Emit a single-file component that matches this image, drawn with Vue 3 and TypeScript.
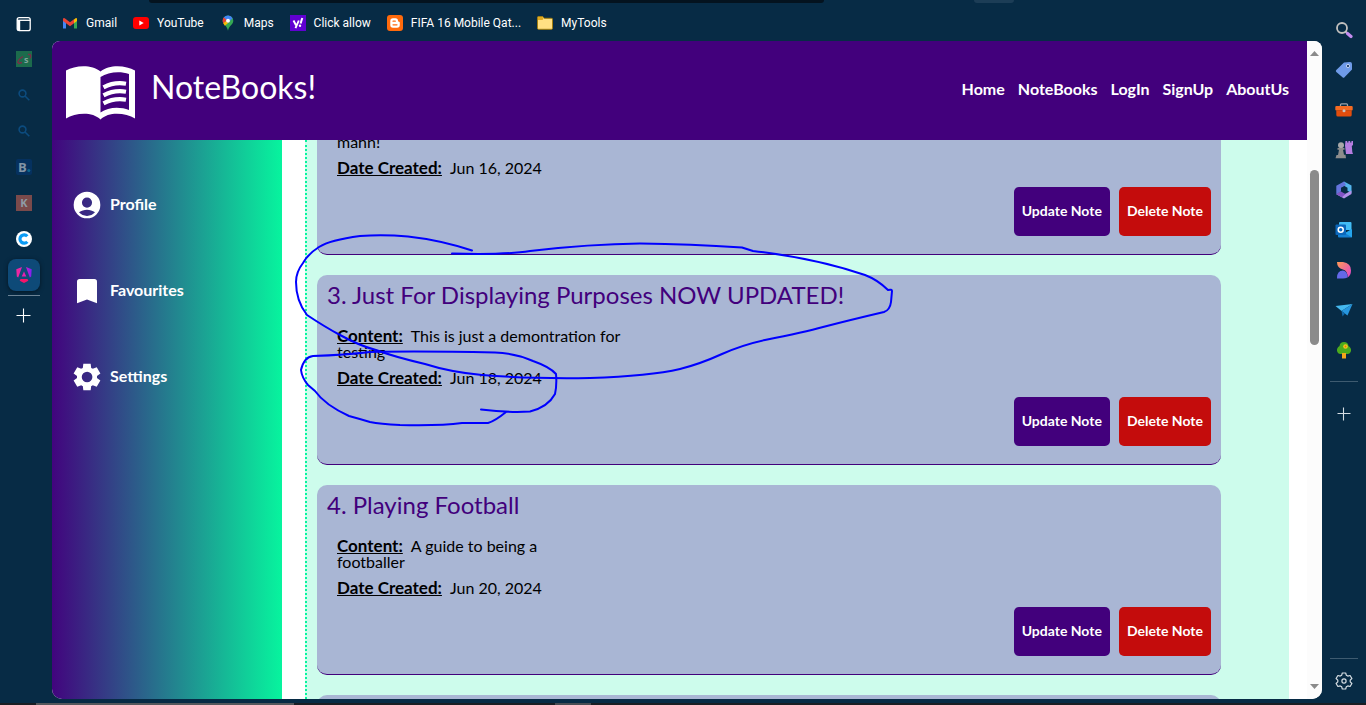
<script setup lang="ts">
interface Note {
  title?: string
  label?: string
  content: string
  date: string
}

const notes: Note[] = [
  { content: 'mahn!', date: 'Jun 16, 2024' },
  {
    title: '3. Just For Displaying Purposes NOW UPDATED!',
    label: 'Content:',
    content: 'This is just a demontration for\ntesting',
    date: 'Jun 18, 2024',
  },
  {
    title: '4. Playing Football',
    label: 'Content:',
    content: 'A guide to being a\nfootballer',
    date: 'Jun 20, 2024',
  },
]

const navLinks: string[] = ['Home', 'NoteBooks', 'LogIn', 'SignUp', 'AboutUs']
</script>

<template>
  <div class="browser">
    <div class="top-edge"><span class="address"></span><span class="chip"></span></div>

    <aside class="tabs">
      <button class="tab tab-first" aria-label="Tab actions">
        <svg width="16" height="16" viewBox="0 0 16 16" fill="none" stroke="#fff" stroke-width="1.3">
          <rect x="1.2" y="1.7" width="13" height="13" rx="2" />
          <path d="M1 4.3h13.4" />
          <path d="M2.7 4v10.5" stroke-width="3" />
        </svg>
      </button>
      <button class="tab" aria-label="Green site">
        <svg width="16" height="16" viewBox="0 0 16 16">
          <rect width="16" height="16" fill="#1c6b4c" />
          <path d="M1.5 12C2 8 4.500 7 7 5.500M2 12.500l4-1M12 3.500c3-.5 3.500 1 2 4" fill="none" stroke="#7c2d48" stroke-width="1.300" />
          <text x="8" y="12" font-size="9" font-weight="700" fill="#7fa39b" font-family="Open Sans, sans-serif">s</text>
        </svg>
      </button>
      <button v-for="n in 2" :key="n" class="tab" aria-label="Search tab">
        <svg width="16" height="16" viewBox="0 0 16 16" fill="none" stroke="#0c4b7e" stroke-width="1.6">
          <circle cx="6.500" cy="6.500" r="3.400" />
          <path d="M9 9l4.300 4.300" />
        </svg>
      </button>
      <button class="tab" aria-label="Booking tab">
        <svg width="16" height="16" viewBox="0 0 16 16">
          <rect width="16" height="16" rx="2" fill="#05315f" />
          <text x="2" y="13" font-size="13" font-weight="700" fill="#8294a5" font-family="Open Sans, sans-serif">B</text>
          <circle cx="12.800" cy="11.500" r="1.500" fill="#0d668f" />
        </svg>
      </button>
      <button class="tab" aria-label="K tab">
        <svg width="16" height="16" viewBox="0 0 16 16">
          <rect width="16" height="16" fill="#7a4a4b" />
          <text x="4.300" y="12" font-size="11" font-weight="700" fill="#8e9ba5" font-family="Open Sans, sans-serif">K</text>
        </svg>
      </button>
      <button class="tab" aria-label="C tab">
        <svg width="16" height="16" viewBox="0 0 16 16">
          <circle cx="8" cy="8" r="8" fill="#fff" />
          <path d="M11.300 5.200A4.200 4.200 0 1 0 11.300 10.800" fill="none" stroke="#0a9bf5" stroke-width="3.200" />
        </svg>
      </button>
      <button class="tab" aria-label="Angular tab">
        <span class="active">
          <svg width="16" height="16" viewBox="0 0 16 16">
            <defs>
              <linearGradient id="ng" x1="0" x2="1">
                <stop offset="0" stop-color="#f0289a" />
                <stop offset="0.550" stop-color="#e020c0" />
                <stop offset="1" stop-color="#7b20f5" />
              </linearGradient>
            </defs>
            <path d="M.3 2.300L6 0 2.200 10.500.8 9.500ZM15.700 2.300L10 0l3.800 10.500 1.400-1Z" fill="url(#ng)" />
            <path d="M8 4.500l2.300 5H5.700Z" fill="#e51fb0" />
            <path d="M4.500 12h7l.8 1.800L8 16l-4.300-2.200Z" fill="#f5146a" />
          </svg>
        </span>
      </button>
      <hr class="rail-line" />
      <button class="tab add" aria-label="New tab">
        <svg width="16" height="16" viewBox="0 0 16 16" stroke="#fff" stroke-width="1.100"><path d="M.5 7.500h14M7.500.5v14" /></svg>
      </button>
    </aside>

    <nav class="bookmarks" aria-label="Bookmarks">
      <a href="#gmail">
        <svg width="16" height="16" viewBox="0 0 16 16">
          <path d="M1 4v9.500h3V6.500Z" fill="#4285f4" />
          <path d="M15 4v9.500h-3V6.500Z" fill="#34a853" />
          <path d="M12 4.500l1.500-1.300Q15 2.500 15 4.500V6l-3 2.300Z" fill="#fbbc04" />
          <path d="M1 6V4.500Q1 2.500 2.700 3.200L8 7.300l4-3v4l-4 3-4-3Z" fill="#ea4335" />
        </svg>Gmail</a>
      <a href="#youtube">
        <svg width="16" height="16" viewBox="0 0 16 16">
          <rect y="2" width="16" height="12" rx="3" fill="#f00" />
          <path d="M6.300 5.500L10.700 8l-4.400 2.500Z" fill="#fff" />
        </svg>YouTube</a>
      <a href="#maps">
        <svg width="16" height="16" viewBox="0 0 16 16">
          <path d="M8 .5a5.300 5.300 0 0 0-5.300 5.300C2.700 9.500 7 10.500 8 15.800 9 10.500 13.300 9.500 13.300 5.800A5.300 5.300 0 0 0 8 .5Z" fill="#34a853" />
          <path d="M3.800 2.500A5.300 5.300 0 0 0 3.500 8.500L7 5Z" fill="#ea4335" />
          <path d="M3.300 8.300L8 4.500l2 2-5.200 4.300Z" fill="#fbbc04" />
          <path d="M3.800 2.600A5.300 5.300 0 0 1 12.600 3.200L8 8Z" fill="#4285f4" />
          <path d="M3.800 2.600L6.500 4.800 5 6.500 2.900 4.600Z" fill="#ea4335" />
          <circle cx="8" cy="5.700" r="1.900" fill="#fff" />
        </svg>Maps</a>
      <a href="#click">
        <svg width="16" height="16" viewBox="0 0 16 16">
          <rect width="16" height="16" fill="#6001d2" />
          <path d="M3.500 5.500L6 10.300M8.800 5.500L5.500 13.200" stroke="#fff" stroke-width="1.900" fill="none" />
          <path d="M12.300 3L10.600 8.500" stroke="#fff" stroke-width="2" />
          <circle cx="10" cy="10.700" r="1.200" fill="#fff" />
        </svg>Click allow</a>
      <a href="#fifa">
        <svg width="16" height="16" viewBox="0 0 16 16">
          <rect width="16" height="16" rx="3" fill="#ff6a0c" />
          <path d="M6 3.300h2.500a2.500 2.500 0 0 1 2.500 2.500q0 1 1 1 .8 0 .8 1v2.200a2.700 2.700 0 0 1-2.700 2.700H6a2.700 2.700 0 0 1-2.700-2.700V6A2.700 2.700 0 0 1 6 3.300Z" fill="#fff" />
          <path d="M6 6.200h2.300M6 9.800h4" stroke="#ff6a0c" stroke-width="1.200" stroke-linecap="round" />
        </svg>FIFA 16 Mobile Qat...</a>
      <a href="#mytools">
        <svg width="16" height="16" viewBox="0 0 16 16">
          <path d="M.5 2.500Q.5 1.500 1.500 1.500h4.200l1.600 1.800h7q1.200 0 1.200 1v9q0 1-1 1h-13q-1 0-1-1Z" fill="#ffe083" stroke="#a07d10" />
          <path d="M1 2h4.500L6.600 3.500 5.500 5H1Z" fill="#e0a920" />
        </svg>MyTools</a>
    </nav>

    <div class="page">
      <div class="site">
        <header class="site-header">
          <svg class="logo" width="69" height="54" viewBox="0 0 69 54">
            <path d="M0 4.500C9-1 26-2 34.500 5.500 43-2 60-1 69 4.500V52.500C60 47 43 45 34.500 53.500 26 45 9 47 0 52.500Z" fill="#fff" />
            <path d="M34.500 11C42 6 54 5 63 8V44C54 40.500 42 41 34.500 46.500Z" fill="#42007c" />
            <path d="M37.500 21.300Q48 15.800 60 17.700M37.500 29.300Q48 23.800 60 25.700M37.500 37.300Q48 31.800 60 33.700" fill="none" stroke="#fff" stroke-width="4.200" />
          </svg>
          <h1>NoteBooks!</h1>
          <nav class="site-nav" aria-label="Main">
            <a v-for="link in navLinks" :key="link" :href="'#' + link">{{ link }}</a>
          </nav>
        </header>

        <div class="body">
          <aside class="menu">
            <a href="#profile">
              <svg width="32" height="32" viewBox="0 0 24 24" fill="#fff"><path d="M12 2a10 10 0 1 0 0 20 10 10 0 0 0 0-20Zm0 4.400a3.800 3.800 0 1 1 0 7.600 3.800 3.800 0 0 1 0-7.600Zm0 13.800c-2.300 0-4.500-1-6-2.700 3.500-2.700 8.500-2.700 12 0A8 8 0 0 1 12 20.200Z" /></svg>
              <span>Profile</span>
            </a>
            <a href="#favourites">
              <svg width="32" height="32" viewBox="0 0 24 24" fill="#fff"><path d="M6.500 3h11q2 0 2 2v16.200L12 18.300l-7.500 2.900V5q0-2 2-2Z" /></svg>
              <span>Favourites</span>
            </a>
            <a href="#settings">
              <svg width="32" height="32" viewBox="0 0 24 24" fill="#fff"><path d="M9.250 22l-.4-3.200q-.325-.125-.612-.3t-.563-.375L4.700 19.375l-2.750-4.750 2.575-1.950Q4.500 12.500 4.500 12.338v-.675q0-.163.025-.338L1.950 9.375l2.750-4.750 2.975 1.250q.275-.2.575-.375t.6-.3L9.250 2h5.500l.4 3.200q.325.125.613.3t.562.375l2.975-1.250 2.750 4.750-2.575 1.950q.025.175.025.338v.675q0 .162-.05.337l2.575 1.950-2.750 4.750-2.950-1.250q-.275.2-.575.375t-.6.3l-.4 3.200Zm2.800-6a4 4 0 1 0 0-8 4 4 0 0 0 0 8Z" /></svg>
              <span>Settings</span>
            </a>
          </aside>

          <main class="notes">
            <article v-for="note in notes" :key="note.date" class="card" :class="{ partial: !note.title }">
              <h2 v-if="note.title">{{ note.title }}</h2>
              <p class="content"><b v-if="note.label">{{ note.label }}</b>{{ note.content }}</p>
              <p class="date"><b>Date Created:</b>{{ note.date }}</p>
              <div class="actions">
                <button class="update">Update Note</button>
                <button class="delete">Delete Note</button>
              </div>
            </article>
            <div class="card next"></div>
          </main>
        </div>
      </div>

      <div class="scrollbar">
        <svg width="9" height="5" viewBox="0 0 9 5"><path d="M0 5L4.500 0 9 5Z" fill="#8b8b8b" /></svg>
        <div class="track"><div class="thumb"></div></div>
        <svg width="9" height="5" viewBox="0 0 9 5"><path d="M0 0h9L4.500 5Z" fill="#8b8b8b" /></svg>
      </div>
    </div>

    <aside class="tools">
      <button aria-label="Search">
        <svg width="18" height="18" viewBox="0 0 18 18" fill="none"><circle cx="7" cy="7" r="5" stroke="#c3c1bf" stroke-width="1.800" /><path d="M10.500 10.500l2 2" stroke="#c3c1bf" stroke-width="2" /><path d="M12.500 12.500l3.500 3" stroke="#c48cf0" stroke-width="3.200" stroke-linecap="round" /></svg>
      </button>
      <button aria-label="Shopping">
        <svg width="18" height="18" viewBox="0 0 18 18"><path d="M9 1.500L15 1Q17 1 17 3v5.500L9.500 16.300q-1 1-2 0L1.300 11q-1-1 0-2Z" fill="#6f9be8" /><circle cx="13" cy="5" r="1.600" fill="#1b3a66" stroke="#dce8ff" stroke-width=".8" /></svg>
      </button>
      <button aria-label="Toolbox">
        <svg width="18" height="18" viewBox="0 0 18 18"><path d="M5.500 5.500V3.800q0-1 1-1h5q1 0 1 1v1.700" fill="none" stroke="#9ca3a8" stroke-width="1.300" /><rect x=".3" y="5" width="17.400" height="4.500" rx="1" fill="#f56b22" /><path d="M1.300 9.300h15.400v4.700q0 1.500-1.500 1.500H2.800q-1.500 0-1.500-1.500Z" fill="#e24d0d" /><circle cx="9" cy="9.700" r="1.500" fill="#c8c5c2" /></svg>
      </button>
      <button aria-label="Games">
        <svg width="18" height="18" viewBox="0 0 18 18"><path d="M10.500 0h1.700v1.500h1.200V0h1.800v1.500h1.200V0H18v4l-1.200 1 .5 6 .7 2h-7l-1-8.500Z" fill="#b57de0" /><circle cx="6" cy="4.300" r="3" fill="#a8a8a8" /><path d="M2.500 7h7v1.800H8l1 5h1.500l.5 3.500H.5L1.500 14H3l1-5.200H2.500Z" fill="#8c8c8c" /></svg>
      </button>
      <button aria-label="Microsoft 365">
        <svg width="18" height="18" viewBox="0 0 18 18"><path d="M9 .5L16.500 4.500V12l-4-2.300V6.700L9 4.700 6.500 6Z" fill="#54b5ed" /><path d="M9 .5L1.300 4.700v8.600L6 10.500V6.700L11 4Z" fill="#6474dc" /><path d="M1.300 13.300L9 17.500l7.500-4.400V9.500L9 13.500 5.500 11Z" fill="#b391e8" /><path d="M1.300 13.300L6 10.500l4.500 2.500L7 16.300Z" fill="#8254c6" /></svg>
      </button>
      <button aria-label="Outlook">
        <svg width="18" height="18" viewBox="0 0 18 18"><rect x="4" y="1" width="12.500" height="8" rx="1" fill="#42bdf5" /><path d="M3 8l7 4.500L17 8v7.500q0 1-1 1H4q-1 0-1-1Z" fill="#147fd1" /><path d="M10 12l7-4v8.500Z" fill="#25a5ec" /><rect x=".5" y="3.500" width="10.500" height="10.500" rx="1" fill="#0b67bb" /><circle cx="5.700" cy="8.700" r="2.500" fill="none" stroke="#fff" stroke-width="1.500" /></svg>
      </button>
      <button aria-label="Designer">
        <svg width="18" height="18" viewBox="0 0 18 18"><defs><linearGradient id="dsg" x1="0" x2="1" y2="1"><stop offset="0" stop-color="#ff9b55" /><stop offset="1" stop-color="#df3fd0" /></linearGradient></defs><path d="M2 1h6q8 1 8 8.500 0 5-3.500 7Q13 10 8 8.500 2 7 2 1Z" fill="url(#dsg)" /><path d="M2 17q0-7.500 6-7.500 4.500.5 4.500 7-2 1-4.500 1H2Z" fill="#6468e8" /></svg>
      </button>
      <button aria-label="Drop">
        <svg width="18" height="18" viewBox="0 0 18 18"><path d="M.5 5L17.500 3 6.500 10Z" fill="#45b9ef" /><path d="M17.500 3L12.500 14.500 6.500 10Z" fill="#2797df" /><path d="M6.500 10l1 5.500L10 12.600Z" fill="#1269a8" /></svg>
      </button>
      <button aria-label="Tree">
        <svg width="18" height="18" viewBox="0 0 18 18"><path d="M9 1q4 0 4.500 4 3 2 2.500 5-1 3.500-4 3H6q-3 .5-4-3-.5-3 2.500-5Q5 1 9 1Z" fill="#4cab1d" /><path d="M7 12h4v5.500H7Z" fill="#f5a51a" /><circle cx="10.500" cy="5.500" r="2.300" fill="#f2c81b" /><circle cx="10.500" cy="5.500" r=".9" fill="#e5780c" /></svg>
      </button>
      <hr class="tool-line" />
      <button class="tool-add" aria-label="Customize">
        <svg width="16" height="16" viewBox="0 0 16 16" stroke="#d5dde3" stroke-width="1.100"><path d="M1.500 7.500h13M7.500 1.500v13" /></svg>
      </button>
      <div class="fill"></div>
      <hr class="tool-line" />
      <button class="tool-settings" aria-label="Settings">
        <svg width="18" height="18" viewBox="0 0 18 18" fill="none" stroke="#d5dde3" stroke-width="1.200"><path d="M7.300 1h3.400l.6 2.200 1.500.9 2.300-.6L16.900 6.500 15.200 8.200v1.600l1.700 1.700-1.800 3-2.300-.6-1.500.9-.6 2.200H7.300l-.6-2.200-1.500-.9-2.300.6-1.800-3L2.800 9.800V8.200L1.100 6.500l1.800-3 2.300.6 1.500-.9Z" stroke-linejoin="round" /><circle cx="9" cy="9" r="2.100" /></svg>
      </button>
    </aside>

    <div class="taskbar"><span class="task"></span><span class="task-chip"></span></div>

    <svg class="ink" width="620" height="210" viewBox="285 225 620 210" fill="none" stroke="#00f" stroke-width="2" stroke-linecap="round" stroke-linejoin="round">
      <path d="M472 250.500Q440 240 408 236.500Q384 234.500 360 236Q330 240 319 247Q308 254 303 263Q296 272 296 282Q296 301 307 315Q325 327 340 335Q360 346 376 350Q395 357 425 364Q450 372 482 375Q530 379 590 378Q650 376 680 369Q700 364 722 354Q742 345 765 340Q805 332 823 327Q850 320 884 312Q890 310 891 302L892 291Q892 289 888 290Q878 280 865 275Q815 258 753 251L742 247.500Q690 244 640 243.500Q590 244 530 251Q505 255 452 253.500" />
      <path d="M481 409.500Q510 413 530 411.500Q548 407 555 394Q557 385 556 374Q550 367 533 361Q515 353 495 352.500Q420 351 370 352Q345 355 313 356Q304 357 301 370Q302 378 308 385L315 391Q325 405 349 416Q360 419 370 422Q380 424 400 425Q440 426 462 423H488Q495 421 506 412" />
    </svg>
  </div>
</template>

<style>
body {
  margin: 0;
}
</style>

<style scoped>
* {
  box-sizing: border-box;
}
.browser {
  position: relative;
  display: grid;
  grid-template-columns: 52px minmax(0, 1fr) 44px;
  grid-template-rows: 4px 37px minmax(0, 1fr) 6px;
  height: 100vh;
  background: #072b45;
  overflow: hidden;
  font-family: Lato, 'Liberation Sans', sans-serif;
}
button {
  border: 0;
  padding: 0;
  background: none;
  font-family: inherit;
  cursor: pointer;
}
a {
  color: inherit;
  text-decoration: none;
}
svg {
  display: block;
  flex: none;
}
hr {
  border: 0;
  margin: 0;
}

.top-edge {
  grid-column: 1 / -1;
  display: flex;
  gap: 150px;
  padding-left: 149px;
}
.address {
  width: 675px;
  height: 3px;
  background: #04131f;
  border-radius: 0 0 8px 8px;
}
.chip {
  width: 40px;
  height: 3px;
  background: #1c3d56;
  border-radius: 0 0 4px 4px;
}

.tabs {
  grid-row: 2 / 4;
  grid-column: 1;
  display: flex;
  flex-direction: column;
  align-items: center;
  padding: 2px 4px 0 0;
}
.tab {
  display: flex;
  align-items: center;
  justify-content: center;
  width: 48px;
  height: 36px;
}
.tab-first {
  height: 35px;
}
.active {
  display: flex;
  align-items: center;
  justify-content: center;
  width: 32px;
  height: 32px;
  border-radius: 8px;
  background: #0e4a78;
  box-shadow: 0 1px 4px rgba(0, 0, 0, 0.5);
}
.rail-line {
  width: 32px;
  height: 1px;
  margin-top: 2px;
  background: #6b8294;
}
.add {
  height: 40px;
}

.bookmarks {
  grid-row: 2;
  grid-column: 2;
  display: flex;
  align-items: center;
  gap: 16px;
  padding-left: 10px;
  font-family: Roboto, 'Noto Sans', sans-serif;
  font-size: 12px;
  color: #fff;
}
.bookmarks a {
  display: flex;
  align-items: center;
  gap: 8px;
  white-space: nowrap;
}

.page {
  grid-row: 3;
  grid-column: 2;
  display: flex;
  overflow: hidden;
  border-radius: 8px 8px 10px 10px;
  background: #fff;
}
.site {
  flex: 1;
  min-width: 0;
  display: flex;
  flex-direction: column;
}
.site-header {
  display: flex;
  align-items: center;
  height: 99px;
  flex: none;
  padding: 4px 18px 0 14px;
  background: #42007c;
  color: #fff;
}
.site-header h1 {
  margin: 0 auto 0 16px;
  padding-bottom: 12px;
  font-size: 32px;
  line-height: 40px;
  font-weight: 400;
}
.site-nav {
  display: flex;
  gap: 13px;
  padding-bottom: 8px;
  font-size: 16px;
  font-weight: 700;
}
.body {
  flex: 1;
  min-height: 0;
  display: flex;
}
.menu {
  width: 230px;
  flex: none;
  display: flex;
  flex-direction: column;
  gap: 54px;
  padding: 49px 0 0 19px;
  background: linear-gradient(90deg, #42047e, #07f49e);
}
.menu a {
  display: flex;
  align-items: center;
  gap: 7px;
  height: 32px;
  color: #fff;
  font-size: 16px;
  font-weight: 700;
}
.menu span {
  padding-bottom: 4px;
}
.notes {
  flex: 1;
  display: flex;
  flex-direction: column;
  gap: 20px;
  margin: 0 18px 0 23px;
  padding-left: 10px;
  border-left: 2px dotted #07f49e;
  background: #cdfcec;
  overflow: hidden;
}
.card {
  flex: none;
  width: 93%;
  padding: 0 10px 18px;
  border-radius: 10px;
  border-bottom: 1px solid #42007c;
  background: #a9b6d4;
  font-size: 16px;
  line-height: 16px;
  color: #000;
}
.card.partial {
  margin-top: -6px;
  border-top-left-radius: 0;
  border-top-right-radius: 0;
}
.card.next {
  height: 60px;
}
.card h2 {
  margin: 0 0 13px;
  font-size: 24px;
  line-height: 40px;
  font-weight: 400;
  color: #42007c;
}
.card p {
  margin: 0 10px;
  white-space: pre-line;
}
.card b {
  margin-right: 8px;
  font-size: 17px;
  line-height: 16px;
  text-decoration: underline;
}
.card .date {
  margin-top: 10px;
}
.actions {
  display: flex;
  justify-content: flex-end;
  gap: 9px;
  margin-top: 11px;
}
.actions button {
  height: 49px;
  padding: 0 8px 2px;
  border-radius: 5px;
  color: #fff;
  font-size: 14px;
  font-weight: 700;
}
.update {
  background: #42007c;
}
.delete {
  background: #c40c0c;
}

.scrollbar {
  width: 15px;
  flex: none;
  display: flex;
  flex-direction: column;
  align-items: center;
  padding: 10px 0;
  background: #fcfcfc;
}
.track {
  flex: 1;
  width: 9px;
  padding-top: 114px;
}
.thumb {
  height: 34%;
  border-radius: 5px;
  background: #8b8b8b;
}

.tools {
  grid-row: 2 / 4;
  grid-column: 3;
  display: flex;
  flex-direction: column;
  align-items: center;
  padding-top: 6px;
}
.tools button {
  display: flex;
  align-items: center;
  justify-content: center;
  width: 40px;
  height: 40px;
  flex: none;
}
.tool-line {
  width: 28px;
  height: 1px;
  margin-top: 11px;
  background: #3e5b70;
}
.tools .tool-add {
  height: 64px;
}
.fill {
  flex: 1;
}
.tools .tool-settings {
  height: 40px;
  padding-top: 4px;
}

.taskbar {
  grid-row: 4;
  grid-column: 1 / -1;
  align-self: end;
  display: flex;
  gap: 261px;
  height: 2px;
  padding-left: 36px;
  background: #1a1e23;
}
.task {
  width: 258px;
  background: #55585c;
}
.task-chip {
  width: 36px;
  background: #484c52;
}

/* Freehand strokes drawn over the page */
.ink {
  position: absolute;
  left: 285px;
  top: 225px;
  pointer-events: none;
}
</style>
